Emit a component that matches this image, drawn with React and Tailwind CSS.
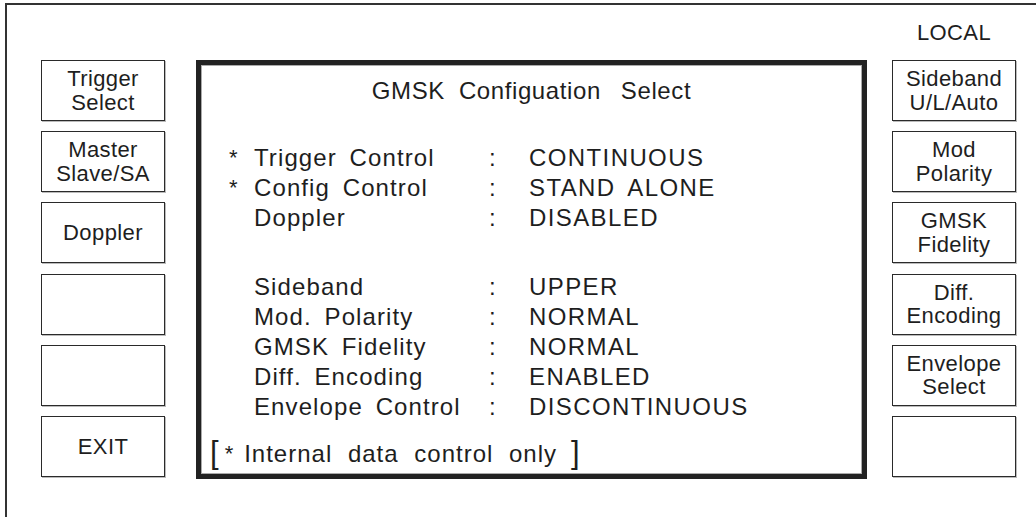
import React from "react";

const leftButtons = [["Trigger", "Select"], ["Master", "Slave/SA"], ["Doppler"], [], [], ["EXIT"]];
const rightButtons = [["Sideband", "U/L/Auto"], ["Mod", "Polarity"], ["GMSK", "Fidelity"], ["Diff.", "Encoding"], ["Envelope", "Select"], []];

const group1 = [
  ["*", "Trigger Control", "CONTINUOUS"],
  ["*", "Config Control", "STAND ALONE"],
  ["", "Doppler", "DISABLED"],
];
const group2 = [
  ["", "Sideband", "UPPER"],
  ["", "Mod. Polarity", "NORMAL"],
  ["", "GMSK Fidelity", "NORMAL"],
  ["", "Diff. Encoding", "ENABLED"],
  ["", "Envelope Control", "DISCONTINUOUS"],
];

function SoftKey({ lines }) {
  return (
    <div className="h-[61px] w-[124px] border-[1.5px] border-[#2a2a2a] shadow-[1px_1px_0_#bbb] flex flex-col items-center justify-center text-center text-[22px] leading-[23.5px] tracking-[0.4px] text-[#1e1e1e]">
      {lines.map((l, i) => (
        <span key={i}>{l}</span>
      ))}
    </div>
  );
}

function Rows({ rows }) {
  return (
    <div className="grid grid-cols-[25px_235px_40px_1fr] text-[24px] leading-[30px] [word-spacing:5px]">
      {rows.map(([star, label, value], i) => (
        <React.Fragment key={i}>
          <span className="text-[22px]">{star}</span>
          <span className="tracking-[1.1px] whitespace-nowrap">{label}</span>
          <span>:</span>
          <span className="tracking-[1.4px] whitespace-nowrap">{value}</span>
        </React.Fragment>
      ))}
    </div>
  );
}

export default function App() {
  return (
    <div className="w-[1036px] h-[517px] overflow-hidden bg-white pt-[3px] pl-[5px] font-['Liberation_Sans',Arial,sans-serif] text-[#1e1e1e]">
      <div className="w-[1100px] h-[600px] border-t-2 border-l-2 border-[#333] flex pl-[34px]">
        {/* left softkeys */}
        <div className="flex flex-col w-[124px] pt-[55px] gap-[10.2px]">
          {leftButtons.map((l, i) => (
            <SoftKey key={i} lines={l} />
          ))}
        </div>

        {/* main display */}
        <div className="ml-[31px] pt-[55px]">
          <div className="w-[671px] h-[419px] border-[5px] border-[#222] shadow-[inset_0_0_0_1px_#aaa] flex flex-col">
            <div className="pt-[11px] h-[41px] leading-[30px] text-[24px] tracking-[0.6px] flex justify-center">
              <span>GMSK</span>
              <span className="ml-[14px]">Configuation</span>
              <span className="ml-[20px]">Select</span>
            </div>
            <div className="mt-[37px] pl-[28px]">
              <Rows rows={group1} />
            </div>
            <div className="mt-[39px] pl-[28px]">
              <Rows rows={group2} />
            </div>
            <div className="mt-[17px] pl-[9px] h-[30px] flex items-center text-[24px] leading-[30px]">
              <span className="text-[31px] leading-[30px] -translate-y-[1px]">[</span>
              <span className="ml-[6px] text-[22px]">*</span>
              <span className="ml-[11px] tracking-[1px] [word-spacing:8px] whitespace-nowrap">
                Internal data control only
              </span>
              <span className="ml-[14px] text-[31px] leading-[30px] -translate-y-[1px]">]</span>
            </div>
          </div>
        </div>

        {/* right softkeys */}
        <div className="ml-[25px] flex flex-col w-[124px]">
          <div className="h-[55px] pt-[15px] text-center text-[22px] leading-[26px] tracking-[0.4px]">LOCAL</div>
          <div className="flex flex-col gap-[10.2px]">
            {rightButtons.map((l, i) => (
              <SoftKey key={i} lines={l} />
            ))}
          </div>
        </div>
      </div>
    </div>
  );
}
